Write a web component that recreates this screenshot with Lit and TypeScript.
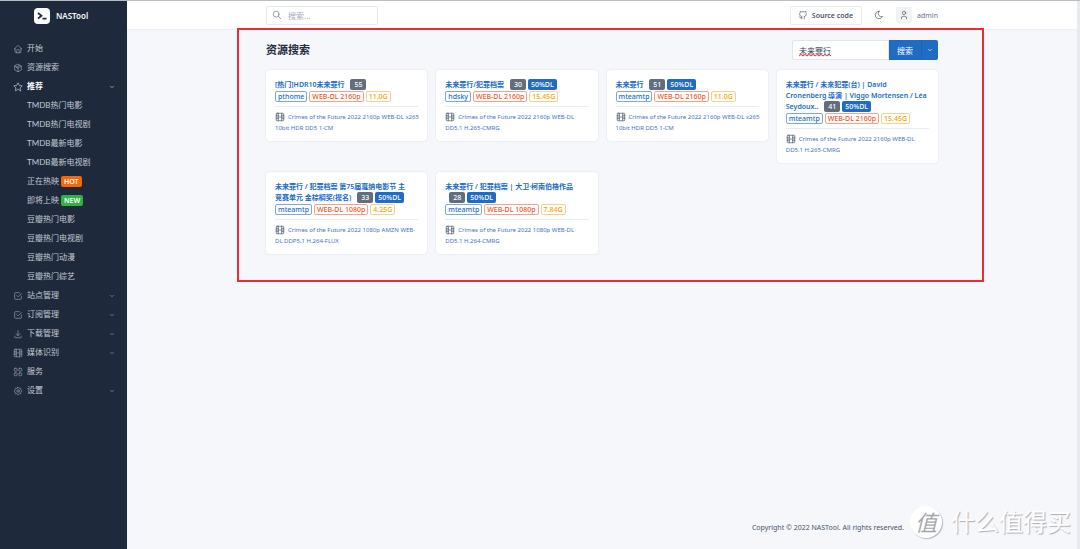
import { LitElement, html, css, svg, nothing } from "lit";
import { customElement } from "lit/decorators.js";

const ICONS = {
  home: svg`<path d="M5 12H3l9-9 9 9h-2M5 12v7a2 2 0 0 0 2 2h10a2 2 0 0 0 2-2v-7M9 21v-6a2 2 0 0 1 2-2h2a2 2 0 0 1 2 2v6"/>`,
  box: svg`<path d="M12 3l8 4.5v9L12 21l-8-4.5v-9zM12 12l8-4.5M12 12v9M12 12L4 7.5M16 5.2L8 9.8"/>`,
  star: svg`<path d="M12 17.8l-6.2 3.2 1.2-6.9-5-4.9 6.9-1L12 2l3.1 6.2 6.9 1-5 4.9 1.2 6.9z"/>`,
  check: svg`<path d="M9 11l3 3 8-8M20 12v6a2 2 0 0 1-2 2H6a2 2 0 0 1-2-2V6a2 2 0 0 1 2-2h9"/>`,
  download: svg`<path d="M4 17v2a2 2 0 0 0 2 2h12a2 2 0 0 0 2-2v-2M7 11l5 5 5-5M12 4v12"/>`,
  film: svg`<path d="M5 3h14a2 2 0 0 1 2 2v14a2 2 0 0 1-2 2H5a2 2 0 0 1-2-2V5a2 2 0 0 1 2-2zM8 3v18M16 3v18M3 8h5M3 16h5M3 12h18M16 8h5M16 16h5"/>`,
  apps: svg`<rect x="3" y="3" width="7" height="7" rx="2"/><rect x="14" y="3" width="7" height="7" rx="2"/><rect x="3" y="14" width="7" height="7" rx="2"/><rect x="14" y="14" width="7" height="7" rx="2"/>`,
  gear: svg`<path d="M10.3 4.3c.4-1.8 3-1.8 3.4 0a1.7 1.7 0 0 0 2.6 1.1c1.5-1 3.3.8 2.4 2.4a1.7 1.7 0 0 0 1 2.5c1.8.5 1.8 3 0 3.4a1.7 1.7 0 0 0-1 2.6c.9 1.6-.9 3.3-2.4 2.4a1.7 1.7 0 0 0-2.6 1c-.4 1.8-3 1.8-3.4 0a1.7 1.7 0 0 0-2.6-1c-1.5.9-3.3-.8-2.4-2.4a1.7 1.7 0 0 0-1-2.6c-1.8-.4-1.8-2.9 0-3.4a1.7 1.7 0 0 0 1-2.5c-.9-1.6.9-3.4 2.4-2.4 1 .6 2.3.1 2.6-1.1z"/><circle cx="12" cy="12" r="3"/>`,
  down: svg`<path d="M6 9l6 6 6-6"/>`,
  search: svg`<circle cx="10" cy="10" r="7"/><path d="M21 21l-6-6"/>`,
  github: svg`<path d="M9 19c-4.3 1.4-4.3-2.5-6-3m12 5v-3.5c0-1 .1-1.4-.5-2 2.8-.3 5.5-1.4 5.5-6a4.6 4.6 0 0 0-1.3-3.2 4.2 4.2 0 0 0-.1-3.2s-1.1-.3-3.5 1.3a12.3 12.3 0 0 0-6.2 0C6.5 2.8 5.4 3.1 5.4 3.1a4.2 4.2 0 0 0-.1 3.2A4.6 4.6 0 0 0 4 9.5c0 4.6 2.7 5.7 5.5 6-.6.6-.6 1.2-.5 2V21"/>`,
  moon: svg`<path d="M12 3h.4a7.5 7.5 0 0 0 7.9 12.4A9 9 0 1 1 12 3z"/>`,
  user: svg`<circle cx="12" cy="7" r="4"/><path d="M6 21v-2a4 4 0 0 1 4-4h4a4 4 0 0 1 4 4v2"/>`,
};

type IconName = keyof typeof ICONS;

const icon = (name: IconName, cls = "") => html`<svg class="icon ${cls}" viewBox="0 0 24 24" aria-hidden="true">${ICONS[name]}</svg>`;

interface NavItem {
  label: string;
  icon: IconName;
  more?: boolean;
  active?: boolean;
  children?: { label: string; tag?: string }[];
}

const NAV: NavItem[] = [
  { label: "开始", icon: "home" },
  { label: "资源搜索", icon: "box" },
  {
    label: "推荐", icon: "star", more: true, active: true,
    children: [
      { label: "TMDB热门电影" },
      { label: "TMDB热门电视剧" },
      { label: "TMDB最新电影" },
      { label: "TMDB最新电视剧" },
      { label: "正在热映", tag: "HOT" },
      { label: "即将上映", tag: "NEW" },
      { label: "豆瓣热门电影" },
      { label: "豆瓣热门电视剧" },
      { label: "豆瓣热门动漫" },
      { label: "豆瓣热门综艺" },
    ],
  },
  { label: "站点管理", icon: "check", more: true },
  { label: "订阅管理", icon: "check", more: true },
  { label: "下载管理", icon: "download", more: true },
  { label: "媒体识别", icon: "film", more: true },
  { label: "服务", icon: "apps" },
  { label: "设置", icon: "gear", more: true },
];

interface Result {
  title: string[];
  seeds: number;
  promo?: boolean;
  site: string;
  quality: string;
  size: string;
  release: string[];
}

const RESULTS: Result[] = [
  { title: ["[热门]HDR10未来罪行"], seeds: 55, site: "pthome", quality: "WEB-DL 2160p", size: "11.0G", release: ["Crimes of the Future 2022 2160p WEB-DL x265", "10bit HDR DD5 1-CM"] },
  { title: ["未来罪行/犯罪档案"], seeds: 30, promo: true, site: "hdsky", quality: "WEB-DL 2160p", size: "15.45G", release: ["Crimes of the Future 2022 2160p WEB-DL", "DD5.1 H.265-CMRG"] },
  { title: ["未来罪行"], seeds: 51, promo: true, site: "mteamtp", quality: "WEB-DL 2160p", size: "11.0G", release: ["Crimes of the Future 2022 2160p WEB-DL x265", "10bit HDR DD5 1-CM"] },
  { title: ["未来罪行 / 未來犯罪(台) | David", "Cronenberg 導演 | Viggo Mortensen / Léa", "Seydoux.."], seeds: 41, promo: true, site: "mteamtp", quality: "WEB-DL 2160p", size: "15.45G", release: ["Crimes of the Future 2022 2160p WEB-DL", "DD5.1 H.265-CMRG"] },
  { title: ["未来罪行 / 犯罪档案 第75届戛纳电影节 主", "竞赛单元 金棕榈奖(提名)"], seeds: 33, promo: true, site: "mteamtp", quality: "WEB-DL 1080p", size: "4.25G", release: ["Crimes of the Future 2022 1080p AMZN WEB-", "DL DDP5.1 H.264-FLUX"] },
  { title: ["未来罪行 / 犯罪档案 | 大卫·柯南伯格作品", ""], seeds: 28, promo: true, site: "mteamtp", quality: "WEB-DL 1080p", size: "7.84G", release: ["Crimes of the Future 2022 1080p WEB-DL", "DD5.1 H.264-CMRG"] },
];

const lines = (parts: string[]) => parts.map((p, i) => html`${i ? html`<br>` : nothing}${p}`);

@customElement("app-root")
export class AppRoot extends LitElement {
  static styles = css`
    :host {
      display: flex;
      position: relative;
      min-height: 100vh;
      box-sizing: border-box;
      border-top: 1px solid #b9bcc2;
      background: #f5f7fb;
      color: #1e293b;
      font-family: "Noto Sans", "Noto Sans CJK SC", sans-serif;
      font-size: 7px;
      line-height: 11px;
    }
    * { box-sizing: border-box; }
    a { color: inherit; text-decoration: none; }
    button, input { font: inherit; margin: 0; }
    ul { list-style: none; margin: 0; padding: 0; }
    .icon { width: 10px; height: 10px; flex: none; fill: none; stroke: currentColor; stroke-width: 1.6; stroke-linecap: round; stroke-linejoin: round; }
    .small { width: 6px; height: 6px; stroke-width: 2.5; }

    .side { width: 127px; flex: none; background: #1e293b; color: #c3cad5; }
    .brand { display: flex; align-items: center; gap: 6px; height: 29px; padding-left: 34px; color: #f8fafc; font-size: 8px; font-weight: 600; }
    .logo { width: 16px; height: 16px; }
    .nav { padding-top: 9px; font-family: Lato, "Noto Sans CJK SC", sans-serif; }
    .link { display: flex; align-items: center; gap: 4px; height: 19px; padding: 0 12px 0 13px; }
    .link .icon { color: #94a3b8; }
    .label { flex: 1; font-size: 8px; }
    .active { color: #fff; font-weight: 600; }
    .active .icon { color: #cbd5e1; }
    .sub { display: flex; align-items: center; gap: 2px; height: 19px; padding-left: 27px; font-size: 8px; }
    .tag { padding: 0 3px; border-radius: 2px; color: #fff; font-family: "Noto Sans", sans-serif; font-size: 7px; font-weight: 600; }
    .hot { background: #f76707; }
    .new { background: #2fb344; }

    .page { flex: 1; min-width: 0; display: flex; flex-direction: column; border-right: 3px solid #e8eaf0; }
    .wrap { width: 100%; max-width: 672px; margin: 0 auto; }
    .top { background: #fff; border-bottom: 1px solid #eceef3; }
    .bar { display: flex; align-items: center; justify-content: space-between; height: 28px; }
    .find { display: flex; align-items: center; gap: 6px; width: 112px; height: 19px; padding: 0 5px; border: 1px solid #e6e8ec; border-radius: 2px; color: #64748b; }
    .find input { flex: 1; min-width: 0; border: 0; padding: 0; outline: 0; background: none; font-size: 8px; }
    .find input::placeholder { color: #a3abb8; }
    .tools { display: flex; align-items: center; }
    .source { display: flex; align-items: center; gap: 4px; height: 19px; padding: 0 8px 0 7px; border: 1px solid #e9ebef; border-radius: 2px; color: #475569; font-weight: 600; }
    .moon { display: flex; margin-left: 12px; padding: 0; border: 0; background: none; color: #475569; }
    .user { display: flex; align-items: center; gap: 5px; margin-left: 12px; color: #64748b; }
    .avatar { display: grid; place-items: center; width: 16px; height: 16px; border-radius: 2px; background: #f0f2f4; color: #475569; }

    .main { position: relative; padding-bottom: 28px; }
    .head { display: flex; align-items: center; justify-content: space-between; padding: 10px 0; }
    h1 { margin: 0; font-size: 11px; line-height: 16px; font-weight: 700; }
    .query { display: flex; height: 20px; }
    .query input {
      width: 97px; padding: 0 6px; border: 1px solid #e2e6ec; border-radius: 2px 0 0 2px; outline: 0; color: #334155; font-size: 8px;
      background: #fff url("data:image/svg+xml,%3Csvg xmlns='http://www.w3.org/2000/svg' width='32' height='3'%3E%3Cpath d='M0 2l2-1.500 2 1.500 2-1.500 2 1.500 2-1.500 2 1.500 2-1.500 2 1.500 2-1.500 2 1.500 2-1.500 2 1.500 2-1.500 2 1.500 2-1.500 2 1.500' fill='none' stroke='%23e03131' stroke-width='1'/%3E%3C/svg%3E") 6px 13px no-repeat;
    }
    .go { width: 32px; padding: 0; border: 0; background: #206bc4; color: #fff; font-size: 8px; }
    .drop { display: grid; place-items: center; width: 17px; padding: 0; border: 0; border-left: 1px solid #1d63b6; border-radius: 0 2px 2px 0; background: #206bc4; color: #fff; }

    .grid { display: grid; grid-template-columns: repeat(4, minmax(0, 1fr)); gap: 9px; align-items: start; }
    .card { padding: 9px 9px 7px; border-radius: 4px; background: #fff; box-shadow: 0 0 2px rgba(30, 41, 59, 0.14); }
    h2 { margin: 0; color: #206bc4; font-size: 7px; line-height: 11px; font-weight: 600; white-space: nowrap; }
    .badge { display: inline-block; vertical-align: top; height: 11px; padding: 0 3px; border-radius: 2px; color: #fff; line-height: 11px; font-weight: 500; background: #206bc4; }
    .seeds { margin: 0 2px 0 4px; padding: 0 4px; background: #626d7d; }
    .pills { display: flex; gap: 2px; margin-top: 1px; }
    .pill { height: 11px; padding: 0 2px; border: 1px solid #7da8dc; border-radius: 2px; color: #206bc4; line-height: 9px; font-weight: 500; }
    .quality { border-color: #f9a184; color: #f0562b; }
    .size { border-color: #fbd08a; color: #f59f00; }
    hr { margin: 4px 0 5px; border: 0; height: 1px; background: #e8ebef; }
    .release { margin: 0; color: #3f74bd; font-size: 6px; white-space: nowrap; }
    .release .icon { display: inline-block; vertical-align: top; margin-right: 3px; color: #475569; }

    .mark { position: absolute; top: -2px; bottom: 0; left: -29px; right: -46px; border: 2px solid #ee2b34; pointer-events: none; }
    .foot { margin-top: auto; padding-bottom: 15px; color: #475569; line-height: 12px; }
    .foot .wrap { padding-right: 34px; text-align: right; }
    .water { position: absolute; right: 9px; bottom: 10px; display: flex; align-items: center; gap: 9px; color: #fff; font-size: 24px; line-height: 34px; text-shadow: 1px 1px 1px #a9adb5; }
    .seal { width: 32px; height: 32px; border-radius: 50%; background: #fff; box-shadow: 1px 1px 1px #b4b8c0; color: #a5a8ad; font-size: 22px; line-height: 32px; text-align: center; font-style: italic; text-shadow: none; }
  `;

  private renderNav(item: NavItem) {
    return html`
      <li>
        <a href="#" class="link ${item.active ? "active" : ""}">
          ${icon(item.icon)}<span class="label">${item.label}</span>${item.more ? icon("down", "small") : nothing}
        </a>
        ${item.children
          ? html`<ul>${item.children.map((c) => html`
              <li><a href="#" class="sub">${c.label}${c.tag ? html`<span class="tag ${c.tag.toLowerCase()}">${c.tag}</span>` : nothing}</a></li>`)}</ul>`
          : nothing}
      </li>`;
  }

  private renderCard(r: Result) {
    return html`
      <article class="card">
        <h2>${lines(r.title)} <span class="badge seeds">${r.seeds}</span>${r.promo ? html`<span class="badge">50%DL</span>` : nothing}</h2>
        <div class="pills">
          <span class="pill">${r.site}</span><span class="pill quality">${r.quality}</span><span class="pill size">${r.size}</span>
        </div>
        <hr />
        <p class="release">${icon("film")}${lines(r.release)}</p>
      </article>`;
  }

  render() {
    return html`
      <aside class="side">
        <a href="#" class="brand">
          <svg class="logo" viewBox="0 0 32 32" aria-hidden="true">
            <rect width="32" height="32" rx="8" fill="#fff" />
            <path d="M8 10l7 5.5-7 5.5M17 21h8" fill="none" stroke="#1e293b" stroke-width="3.5" />
          </svg>
          NASTool
        </a>
        <nav class="nav"><ul>${NAV.map((n) => this.renderNav(n))}</ul></nav>
      </aside>
      <div class="page">
        <header class="top">
          <div class="wrap bar">
            <label class="find">${icon("search")}<input type="text" placeholder="搜索..." aria-label="搜索" /></label>
            <div class="tools">
              <a href="#" class="source">${icon("github")}Source code</a>
              <button class="moon" aria-label="Dark mode">${icon("moon")}</button>
              <a href="#" class="user"><span class="avatar">${icon("user")}</span>admin</a>
            </div>
          </div>
        </header>
        <main class="wrap main">
          <div class="head">
            <h1>资源搜索</h1>
            <form class="query" @submit=${(e: Event) => e.preventDefault()}>
              <input type="text" aria-label="资源搜索" .value=${"未来罪行"} />
              <button class="go">搜索</button>
              <button type="button" class="drop" aria-label="More">${icon("down", "small")}</button>
            </form>
          </div>
          <section class="grid">${RESULTS.map((r) => this.renderCard(r))}</section>
          <div class="mark"></div>
        </main>
        <footer class="foot"><div class="wrap">Copyright © 2022 NASTool. All rights reserved.</div></footer>
      </div>
      <div class="water"><span class="seal">值</span>什么值得买</div>
    `;
  }
}
